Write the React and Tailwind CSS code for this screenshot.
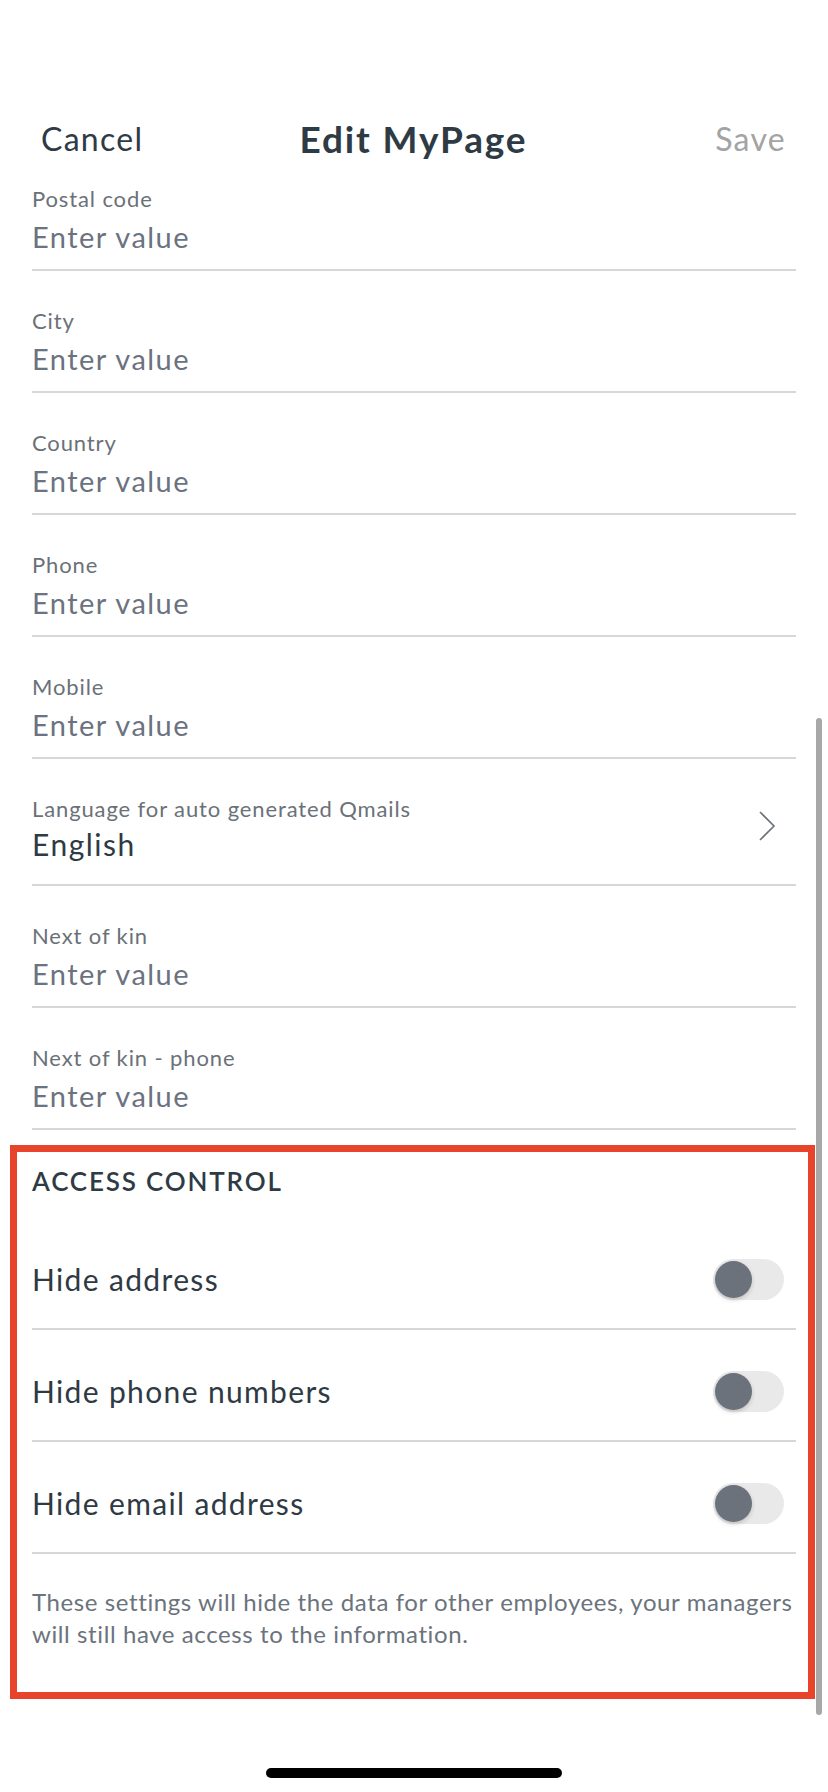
import {useState} from "react";

const fields = [
    {label: "Postal code", value: "Enter value"},
    {label: "City", value: "Enter value"},
    {label: "Country", value: "Enter value"},
    {label: "Phone", value: "Enter value"},
    {label: "Mobile", value: "Enter value"},
    {label: "Language for auto generated Qmails", value: "English", select: true},
    {label: "Next of kin", value: "Enter value"},
    {label: "Next of kin - phone", value: "Enter value"},
];

const toggles = ["Hide address", "Hide phone numbers", "Hide email address"];

function Toggle({on, onClick}) {
    return (
        <div
            onClick={onClick}
            className={`w-[71px] h-[41px] rounded-full p-[2px] flex cursor-pointer ${on ? "bg-[#34c759] justify-end" : "bg-[#e9e9ea] justify-start"}`}
        >
            <div className="w-[37px] h-[37px] rounded-full bg-[#6c727b] shadow-[0_2px_4px_rgba(0,0,0,0.18)]"/>
        </div>
    );
}

function Field({label, value, select, first}) {
    return (
        <div className={`${first ? "pt-[27px]" : "pt-[37px]"} ${select ? "pb-[20px]" : "pb-[12px]"} border-b-2 border-[#d5d8da] flex items-center`}>
            <div className="flex-1">
                <div className="text-[22px] leading-[26px] tracking-[0.04em] text-[#6b7178]">{label}</div>
                <div className={`leading-[40px] tracking-[0.05em] ${select ? "mt-[2px] text-[30px] text-[#2e3a44]" : "mt-[5px] text-[29px] text-[#6b7280]"}`}>
                    {value}
                </div>
            </div>
            {select && (
                <svg width="20" height="32" viewBox="0 0 20 32" className="mr-[19px] mb-[8px]">
                    <path d="M3 2 L17 16 L3 30" fill="none" stroke="#6b7178" strokeWidth="1.6"/>
                </svg>
            )}
        </div>
    );
}

function App() {
    const [hidden, setHidden] = useState([false, false, false]);

    const flip = (i) => {
        setHidden(hidden.map((v, j) => (j === i ? !v : v)));
    };

    return (
        <div className="relative w-[828px] min-h-[1792px] bg-white font-['Lato',sans-serif] text-[#2e3a44]">
            {/*head*/}
            <div className="pt-[119px] pl-[41px] pr-[42px] flex justify-between items-center h-[159px]">
                <div className="text-[32px] leading-[40px] tracking-[0.04em] w-[150px]">Cancel</div>
                <div className="text-[37px] leading-[40px] tracking-[0.05em] font-bold">Edit MyPage</div>
                <div className="text-[32px] leading-[40px] tracking-[0.04em] w-[150px] text-right text-[#a3a3a3]">Save</div>
            </div>
            {/*end head*/}

            {/*fields*/}
            <div className="px-[32px]">
                {fields.map((f, i) => (
                    <Field key={f.label} {...f} first={i === 0}/>
                ))}
            </div>

            {/*access control*/}
            <div className="mt-[15px] ml-[10px] w-[805px] border-[7px] border-[#e8432b] pl-[15px] pr-[12px]">
                <div className="pt-[13px] pb-[21px] text-[26px] leading-[32px] tracking-[0.07em] font-semibold">ACCESS CONTROL</div>
                {toggles.map((t, i) => (
                    <div key={t} className="pt-[41px] pb-[28px] border-b-2 border-[#d5d8da] flex items-center justify-between">
                        <div className="text-[30px] leading-[41px] tracking-[0.045em]">{t}</div>
                        <div className="mr-[12px]">
                            <Toggle on={hidden[i]} onClick={() => flip(i)}/>
                        </div>
                    </div>
                ))}
                <div className="pt-[32px] pb-[42px] -mr-[10px] text-[24px] leading-[32px] tracking-[0.025em] text-[#6b737c]">
                    These settings will hide the data for other employees, your managers will still have access to the information.
                </div>
            </div>

            {/*home indicator*/}
            <div className="mt-[69px] mx-auto w-[296px] h-[10px] rounded-full bg-black"/>

            {/*scrollbar*/}
            <div className="absolute left-[816px] top-[718px] w-[6px] h-[997px] rounded-full bg-[#a8a8a8]"/>
        </div>
    );
}

export default App;
